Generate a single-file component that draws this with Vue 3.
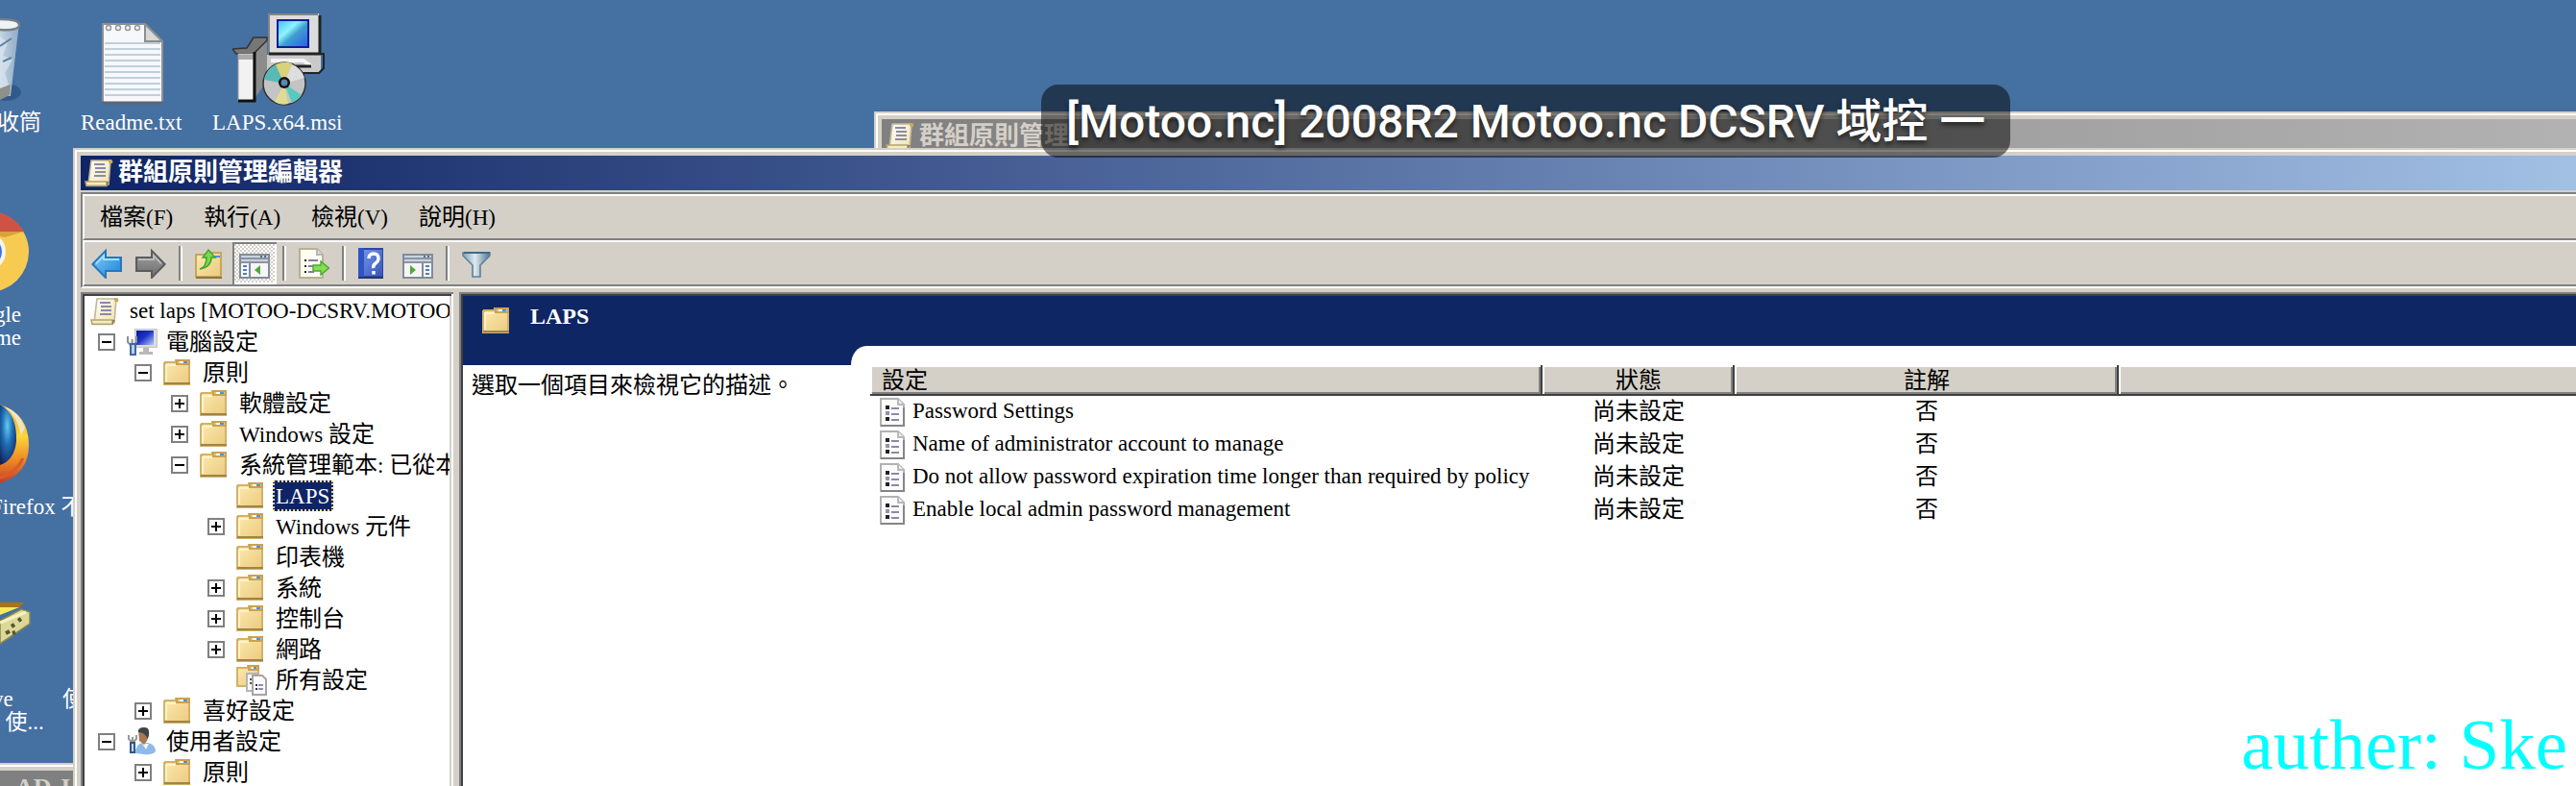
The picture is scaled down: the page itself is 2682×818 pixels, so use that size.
<script setup>
import { ref } from 'vue'

const menus = ['檔案(F)', '執行(A)', '檢視(V)', '說明(H)']

const tools = [
  { icon: 'back', name: '上一步' },
  { icon: 'forward', name: '下一步' },
  { sep: true },
  { icon: 'up', name: '上移一層' },
  { icon: 'tree', name: '顯示主控台樹狀目錄', pressed: true },
  { sep: true },
  { icon: 'export', name: '匯出清單' },
  { sep: true },
  { icon: 'help', name: '說明' },
  { icon: 'actions', name: '顯示執行窗格' },
  { sep: true },
  { icon: 'filter', name: '篩選' },
]

const nodes = [
  { level: 0, box: '-', icon: 'computer', text: '電腦設定' },
  { level: 1, box: '-', icon: 'folder', text: '原則' },
  { level: 2, box: '+', icon: 'folder', text: '軟體設定' },
  { level: 2, box: '+', icon: 'folder', text: 'Windows 設定' },
  { level: 2, box: '-', icon: 'folder', text: '系統管理範本: 已從本機電腦' },
  { level: 3, box: '', icon: 'folder', text: 'LAPS' },
  { level: 3, box: '+', icon: 'folder', text: 'Windows 元件' },
  { level: 3, box: '', icon: 'folder', text: '印表機' },
  { level: 3, box: '+', icon: 'folder', text: '系統' },
  { level: 3, box: '+', icon: 'folder', text: '控制台' },
  { level: 3, box: '+', icon: 'folder', text: '網路' },
  { level: 3, box: '', icon: 'allsettings', text: '所有設定' },
  { level: 1, box: '+', icon: 'folder', text: '喜好設定' },
  { level: 0, box: '-', icon: 'user', text: '使用者設定' },
  { level: 1, box: '+', icon: 'folder', text: '原則' },
]

const selected = ref(5)

const settings = [
  'Password Settings',
  'Name of administrator account to manage',
  'Do not allow password expiration time longer than required by policy',
  'Enable local admin password management',
]

// Splits a label into runs so that Latin text can be set slightly smaller.
const runs = (text) =>
  text.match(/[\x00-\x7f]+|[^\x00-\x7f]+/g).map((t) => ({ t, latin: t.charCodeAt(0) < 128 }))
</script>

<template>
  <main class="desktop">
    <svg class="defs" aria-hidden="true">
      <defs>
        <linearGradient id="gFolder" x1="0" y1="0" x2="1" y2="1">
          <stop offset="0" stop-color="#fdeab0" /><stop offset="1" stop-color="#ebca7e" />
        </linearGradient>
        <linearGradient id="gBlue" x1="0" y1="0" x2="1" y2="1">
          <stop offset="0" stop-color="#7fd0fb" /><stop offset="1" stop-color="#1f7fd6" />
        </linearGradient>
        <linearGradient id="gGray" x1="0" y1="0" x2="0" y2="1">
          <stop offset="0" stop-color="#a2a2a2" /><stop offset="1" stop-color="#6c6c6c" />
        </linearGradient>
        <linearGradient id="gHelp" x1="0" y1="0" x2="1" y2="1">
          <stop offset="0" stop-color="#7390e6" /><stop offset="1" stop-color="#3557bd" />
        </linearGradient>
        <linearGradient id="gFunnel" x1="0" y1="0" x2="1" y2="0">
          <stop offset="0" stop-color="#7fa0b8" /><stop offset=".45" stop-color="#dfeaf0" /><stop offset="1" stop-color="#4d7492" />
        </linearGradient>
        <linearGradient id="gScreen" x1="0" y1="0" x2="1" y2="1">
          <stop offset="0" stop-color="#0a1a9c" /><stop offset=".45" stop-color="#1c30c4" /><stop offset="1" stop-color="#b3cbfa" />
        </linearGradient>
        <linearGradient id="gScroll" x1="0" y1="0" x2="1" y2="1">
          <stop offset="0" stop-color="#ffffff" /><stop offset="1" stop-color="#f0e2a8" />
        </linearGradient>
        <linearGradient id="gLcd" x1="0" y1="0" x2="1" y2="1">
          <stop offset="0" stop-color="#4cc0f0" /><stop offset=".35" stop-color="#8df4ff" /><stop offset=".55" stop-color="#3f9fd0" /><stop offset="1" stop-color="#2f5fee" />
        </linearGradient>
        <radialGradient id="gFox" cx=".45" cy=".35" r=".7">
          <stop offset="0" stop-color="#66c8f2" /><stop offset=".45" stop-color="#1f6fb4" /><stop offset="1" stop-color="#12235c" />
        </radialGradient>
        <linearGradient id="gFlame" x1="0" y1="0" x2="0" y2="1">
          <stop offset="0" stop-color="#e8a032" /><stop offset=".4" stop-color="#fbd63c" /><stop offset=".7" stop-color="#f08a24" /><stop offset="1" stop-color="#c23c26" />
        </linearGradient>
        <linearGradient id="gBin" x1="0" y1="0" x2="1" y2="0">
          <stop offset="0" stop-color="#c3d3e0" /><stop offset="1" stop-color="#8fabc6" />
        </linearGradient>
      </defs>

      <symbol id="folder" viewBox="0 0 16 16">
        <path d="M.5 3h.5V2.500h5.500V1.500h7v12.500h-13z" fill="url(#gFolder)" stroke="#d3b16a" />
        <path d="M.5 13.500h13.500" fill="none" stroke="#a08544" />
        <path d="M7 1.500h6.500v2H7z" fill="#e6c67c" stroke="#c9a252" />
        <path d="M8.500 2.500h2" stroke="#fff" /><path d="M10.500 2.500h2" stroke="#4b93e0" />
        <path d="M1.500 12.500V4h5" fill="none" stroke="#fff3c8" />
      </symbol>
      <symbol id="allsettings" viewBox="0 0 16 16">
        <path d="M.5 1.500H6v-1h5.500V11H.5z" fill="url(#gFolder)" stroke="#d3b16a" />
        <path d="M6.500.5h5v2h-5z" fill="#e6c67c" stroke="#c9a252" /><path d="M8 1.500h1" stroke="#fff" /><path d="M9 1.500h1.500" stroke="#4b93e0" />
        <path d="M5.500 4.500h5.500v9H5.500z" fill="#f7f7f7" stroke="#b5b5b5" />
        <path d="M7 7.500h1M7 9.500h1" stroke="#555" />
        <path d="M8.500 5.500h5l2 2v8h-7z" fill="#fcfcfc" stroke="#a5a5a5" />
        <path d="M10 10.500h1M10 12.500h1" stroke="#333" /><path d="M11.500 10.500h2.500M11.500 12.500h2.500" stroke="#8e8eb0" />
      </symbol>
      <symbol id="scroll" viewBox="0 0 16 16">
        <path d="M3.500 1.500h10l-1 12.500H2z" fill="url(#gScroll)" stroke="#c0b698" stroke-width=".8" />
        <path d="M12.500 1h1.500q1 .5.5 2h-1.800z" fill="#c2ab5e" />
        <path d="M.5 12.500h11v2.200H1z" fill="#f6ecc2" stroke="#b3a46e" stroke-width=".8" />
        <path d="M11.500 12.500h1.500l-1.500 2.500z" fill="#8f8257" />
        <path d="M5 3.500h5.500M5.500 5.500H11M5.500 7.500H11M5 9.500h6" stroke="#8b8aa8" />
      </symbol>
      <symbol id="computer" viewBox="0 0 16 16">
        <path d="M4 1h12v10H4z" fill="#c4c6c6" /><path d="M4.500 1.500h11v9h-11z" fill="#dcdcd8" /><path d="M5 2h9v7.500H5z" fill="url(#gScreen)" />
        <path d="M8.500 11h3v2h2v1.500h-7V13h2z" fill="#b8b8b8" />
        <path d="M.5 5v3L2 9.500h1.500L5 8V5M2.800 6.500v3" fill="none" stroke="#8a8f92" /><path d="M2 9h2.500v5.500H2z" fill="#b8d2ee" stroke="#41699e" />
      </symbol>
      <symbol id="user" viewBox="0 0 16 16">
        <path d="M4.500 14q0-5 4-5.500h2.500q4 1 4 4.500-2 2-6 1.500z" fill="#8fb9e6" /><path d="M8 9l2 3 1.500-3z" fill="#eef5fb" />
        <path d="M6 1.500q2-2 5 0 1 3-.5 6l-1.500 2-2.500-2z" fill="#a97852" /><path d="M6 2q2-2.500 5-1 1.300 3-.2 5.500Q9.500 3 6 3z" fill="#3b4446" />
        <path d="M1 4.500v2l1 1h2l1-1v-2M3 5.500v3" fill="none" stroke="#999" /><path d="M2 8.500h2v5H2z" fill="#cadcf0" stroke="#2f5592" />
      </symbol>
      <symbol id="back" viewBox="0 0 16 16">
        <path d="M.7 8.500L7.500 1.500v3.500h8v7h-8v3.500z" fill="url(#gBlue)" stroke="#2678bd" /><path d="M2.500 8.200L6.500 4v2h8" fill="none" stroke="#a5e0fc" />
      </symbol>
      <symbol id="forward" viewBox="0 0 16 16">
        <path d="M15.300 8.500L8.500 1.500v3.500h-8v7h8v3.500z" fill="url(#gGray)" stroke="#5c5c5c" /><path d="M1.500 6h8V4l4 4.200" fill="none" stroke="#bbb" />
      </symbol>
      <symbol id="up" viewBox="0 0 16 16">
        <path d="M.5 4.500V3.500H8v-1h5.500V15H.5z" fill="url(#gFolder)" stroke="#c9a55c" /><path d="M.5 15.500h13.500" stroke="#8f7638" />
        <path d="M10 4.500h3" stroke="#4b93e0" />
        <path d="M2.500 11q3.500-1 3.500-6H4L7 1l3.500 4H8.500q0 5-6 6z" fill="#7dd84c" stroke="#3fa02c" stroke-width=".7" />
      </symbol>
      <symbol id="tree" viewBox="0 0 16 16">
        <path d="M.5 3.500h15v12H.5z" fill="#f6f6f8" stroke="#838b99" /><path d="M1 4h14v3H1z" fill="#c9d3df" /><path d="M1 5.500h14M1 7.500h14" stroke="#8a94a4" />
        <path d="M11 4.500h1M13 4.500h1" stroke="#5d6c86" /><path d="M5.500 8v7" stroke="#838b99" /><path d="M2 9.500h2M2 11.500h2M2 13.500h2" stroke="#4c7fc0" />
        <path d="M11 9v5L8 11.500z" fill="#4fa83a" />
      </symbol>
      <symbol id="actions" viewBox="0 0 16 16">
        <path d="M.5 3.500h15v12H.5z" fill="#f6f6f8" stroke="#838b99" /><path d="M1 4h14v3H1z" fill="#c9d3df" /><path d="M1 5.500h14M1 7.500h14" stroke="#8a94a4" />
        <path d="M11 4.500h1M13 4.500h1" stroke="#5d6c86" /><path d="M10.500 8v7" stroke="#838b99" /><path d="M12 9.500h2M12 11.500h2M12 13.500h2" stroke="#4c7fc0" />
        <path d="M4 9v5l3-2.500z" fill="#4fa83a" />
      </symbol>
      <symbol id="export" viewBox="0 0 16 16">
        <path d="M.5.5h9l3 3v12H.5z" fill="#fffdf0" stroke="#b5b09a" /><path d="M9.500.5v3h3" fill="#ddd" stroke="#b5b5b5" />
        <path d="M3 6.500h1M3 9.500h1M3 12.500h1" stroke="#222" /><path d="M5 6.500h5M5 9.500h3M5 12.500h3" stroke="#8080a0" />
        <path d="M7.500 9h4V7l4.200 3.500L11.500 14v-2h-4z" fill="#86dc52" stroke="#4ba632" stroke-width=".7" />
      </symbol>
      <symbol id="help" viewBox="0 0 16 16">
        <path d="M0 0h13v16H0z" fill="#2d479f" /><path d="M3 1h9.500v13.500H3z" fill="url(#gHelp)" /><path d="M0 0h3v16H0z" fill="#2f55c4" /><path d="M0 15h13v1H0z" fill="#26356f" />
        <path d="M5.500 5.500Q5.500 3 8 3t2.500 2.500Q10.500 7 9 8T8 10.500M8 12v1.700" fill="none" stroke="#fff" stroke-width="1.700" />
      </symbol>
      <symbol id="filter" viewBox="0 0 16 16">
        <path d="M.5 2.500h14v1.500L9.500 9v6H5.500V9L.5 4z" fill="url(#gFunnel)" stroke="#5f8199" stroke-width=".8" /><path d="M1 2.500h13.500" stroke="#416986" />
      </symbol>
      <symbol id="policy" viewBox="0 0 13 15">
        <path d="M.5.5h9l3 3v11H.5z" fill="#fcfcfc" stroke="#b2b2b2" /><path d="M.5 14.500h12V5" fill="none" stroke="#858585" /><path d="M9.500.5v3h3" fill="#eee" stroke="#b9b9b9" />
        <path d="M3 5h2M3 11h2" stroke="#222" stroke-width="2" /><path d="M3 8h2" stroke="#9292ad" stroke-width="2" /><path d="M6 5.500h4M6 8.500h4M6 11.500h4" stroke="#8b8aa8" />
      </symbol>
    </svg>

    <section class="icons" aria-label="桌面">
      <svg class="pic bin" viewBox="0 0 24 90">
        <ellipse cx="6" cy="78" rx="16" ry="9" fill="#33598a" />
        <path d="M0 6h20l-9 76H0z" fill="url(#gBin)" /><path d="M0 20l8 6-5 14 10 4-8 14 4 12-9 5z" fill="#dbe6ef" opacity=".7" /><path d="M3 46l9-4M0 30l12-8" stroke="#5f82a8" stroke-width="2" />
        <path d="M0 74l11-4-1 11-10 5z" fill="#8f8f8c" />
        <path d="M0 2q20 0 20 6 0 6-20 5" fill="#eef3f6" stroke="#777e84" stroke-width="2.500" />
      </svg>
      <svg class="pic notepad" viewBox="0 0 64 86">
        <path d="M1 1h44l18 18v64H1z" fill="#f7f8fc" stroke="#8d9196" stroke-width="2" /><path d="M0 83h64" stroke="#5c6670" stroke-width="3" />
        <path d="M3 21h58M3 27h58M3 33h58M3 39h58M3 45h58M3 51h58M3 57h58M3 63h58M3 69h58M3 75h58" stroke="#bfd0dc" stroke-width="2" />
        <path d="M45 1v18h18z" fill="#d7d8da" stroke="#8d8d8d" stroke-width="2" />
        <g fill="none" stroke="#999" stroke-width="1.500"><circle cx="7" cy="5" r="2.500" /><circle cx="17" cy="5" r="2.500" /><circle cx="27" cy="5" r="2.500" /><circle cx="37" cy="5" r="2.500" /></g>
      </svg>
      <svg class="pic installer" viewBox="0 0 96 96">
        <path d="M34 43h58v16l-4 4H34z" fill="#c9c9c9" /><path d="M92 42h3v15l-5 5H70" fill="none" stroke="#222" stroke-width="2" /><path d="M40 49h34l8 6" fill="none" stroke="#f4f4f4" stroke-width="4" /><path d="M66 55h16" stroke="#222" stroke-width="3" />
        <path d="M38 0h52v42H38z" fill="#dcdcdc" /><path d="M38 42V1h51" fill="none" stroke="#858585" stroke-width="2" /><path d="M91 2v40H38" fill="none" stroke="#222" stroke-width="3" />
        <path d="M46 6h34v30H46z" fill="#101c92" /><path d="M48 8h30v26H48z" fill="url(#gLcd)" />
        <path d="M22 36l14-10v44L22 90z" fill="#8c8c8c" /><path d="M0 37l4 5h18l14-14V25H22L15 36z" fill="#777" stroke="#333" stroke-width="1.500" /><path d="M6 42h16v49H6z" fill="#f2f2f2" stroke="#999" /><path d="M6 43h16v5H6z" fill="#a9a9a9" /><path d="M23 40v51H6" fill="none" stroke="#111" stroke-width="3" />
        <circle cx="54" cy="73" r="22" fill="#c4c4c4" stroke="#333" stroke-width="1.500" />
        <path d="M54 73L33 69a22 22 0 0 1 12-16z" fill="#58b9b6" /><path d="M54 73L45 53q9-4 17-1z" fill="#d8d27a" /><path d="M54 73l8-20a22 22 0 0 1 13 14z" fill="#dedede" />
        <path d="M54 73l18 12a22 22 0 0 1-10 8z" fill="#59c9bd" /><path d="M54 73l4 21q-8 2-14-2z" fill="#dfdb93" />
        <circle cx="54" cy="72" r="6" fill="#111" /><circle cx="54" cy="72" r="3.500" fill="#5b86ae" />
      </svg>
      <svg class="pic chrome" viewBox="0 0 32 86">
        <circle cx="-12" cy="43" r="42" fill="#f7cb52" /><path d="M-12 1A42 42 0 0 1 25 22H-12z" fill="#cf5245" /><path d="M0 22h25l-20 6-5-1z" fill="#d9a23e" /><circle cx="-14" cy="43" r="20" fill="#f4f4f4" /><circle cx="-14" cy="43" r="16" fill="#3f74e0" />
      </svg>
      <svg class="pic firefox" viewBox="0 0 32 86">
        <path d="M0 2q30 10 30 42 0 30-30 40z" fill="url(#gFlame)" /><path d="M0 2q18 10 17 38Q15 60 0 65z" fill="url(#gFox)" /><path d="M4 4q14 10 18 30l4-8Q20 9 4 4z" fill="#eee6c0" /><path d="M24 58q-8 16-24 20" fill="none" stroke="#d75c2a" stroke-width="3" />
      </svg>
      <svg class="pic tool" viewBox="0 0 34 48">
        <path d="M0 1h25l-6 6H0z" fill="#a87412" /><path d="M0 6h20l-20 8z" fill="#f6ea58" /><path d="M0 20L22 8l9 3v12L0 44z" fill="#dcd898" stroke="#8b864e" stroke-width="1.500" /><path d="M0 22l27-11" stroke="#f6f2bd" stroke-width="3" /><path d="M19 20l3-2M12 26l3-2M6 33l4-2M13 33l3-1" stroke="#56542d" stroke-width="4" />
      </svg>
      <span class="cap c-bin">收筒</span>
      <span class="cap c-readme">Readme.txt</span>
      <span class="cap c-msi">LAPS.x64.msi</span>
      <span class="cap c-chrome">gle<br />me</span>
      <span class="cap c-fox">Firefox 不</span>
      <span class="cap c-tool">ve<br />r 使...</span>
      <span class="cap c-next">使</span>
    </section>

    <section class="window window-corner"><div class="caption inactive">AD J</div></section>

    <section class="window window-back">
      <div class="caption inactive"><svg class="i32"><use href="#scroll" /></svg><span>群組原則管理</span></div>
    </section>

    <section class="window window-main">
      <header class="caption active"><svg class="i32"><use href="#scroll" /></svg><h1>群組原則管理編輯器</h1></header>

      <div class="bars">
        <nav class="menubar">
          <button v-for="m in menus" :key="m" type="button">
            <span v-for="r in runs(m)" :key="r.t" :class="{ latin: r.latin }">{{ r.t }}</span>
          </button>
        </nav>
        <div class="toolbar" role="toolbar">
          <template v-for="(t, i) in tools" :key="i">
            <span v-if="t.sep" class="sep"></span>
            <button v-else type="button" :class="{ pressed: t.pressed }" :aria-label="t.name">
              <svg class="i32"><use :href="'#' + t.icon" /></svg>
            </button>
          </template>
        </div>
      </div>

      <div class="panes">
        <ul class="tree" role="tree">
          <li class="root" role="treeitem">
            <svg class="i32"><use href="#scroll" /></svg><span class="label latin">set laps [MOTOO-DCSRV.MOTOO</span>
          </li>
          <li v-for="(n, i) in nodes" :key="i" role="treeitem" :style="{ paddingLeft: 14 + 38 * n.level + 'px' }">
            <button v-if="n.box" type="button" class="box" :class="{ plus: n.box === '+' }" :aria-label="n.box === '+' ? '展開' : '摺疊'"></button>
            <span v-else class="nobox"></span>
            <svg class="i32"><use :href="'#' + n.icon" /></svg>
            <span class="label" :class="{ on: selected === i }" @click="selected = i">
              <span v-for="r in runs(n.text)" :key="r.t" :class="{ latin: r.latin }">{{ r.t }}</span>
            </span>
          </li>
        </ul>

        <section class="detail">
          <header class="banner"><svg class="i32"><use href="#folder" /></svg><h2>LAPS</h2></header>
          <div class="content">
            <p class="hint">選取一個項目來檢視它的描述。</p>
            <div class="sheet">
              <table>
                <colgroup><col class="w-name" /><col class="w-state" /><col class="w-note" /><col /></colgroup>
                <thead>
                  <tr><th class="first">設定</th><th>狀態</th><th>註解</th><th></th></tr>
                </thead>
                <tbody>
                  <tr v-for="s in settings" :key="s">
                    <td><div class="entry"><svg class="sheet-icon"><use href="#policy" /></svg><span>{{ s }}</span></div></td>
                    <td class="mid">尚未設定</td>
                    <td class="mid">否</td>
                    <td></td>
                  </tr>
                </tbody>
              </table>
            </div>
          </div>
        </section>
      </div>
    </section>

    <div class="hud">[Motoo.nc] 2008R2 Motoo.nc DCSRV 域控 一</div>
    <div class="mark">auther: Ske</div>
  </main>
</template>

<style>
html,
body,
#app {
  height: 100%;
}
body {
  margin: 0;
}
</style>

<style scoped>
.desktop {
  position: relative;
  height: 100%;
  overflow: hidden;
  background: #4570a2;
  color: #000;
  font-family: "Liberation Serif", "Noto Sans CJK TC", serif;
  font-size: 24px;
  line-height: 32px;
  white-space: nowrap;
}
.defs {
  position: absolute;
  width: 0;
  height: 0;
}
.i32 {
  width: 32px;
  height: 32px;
  flex: none;
  display: block;
}
.latin {
  font-size: 23px;
}
button {
  border: 0;
  padding: 0;
  margin: 0;
  background: none;
  color: inherit;
  font: inherit;
}
h1,
h2,
p,
ul {
  margin: 0;
  padding: 0;
}

/* desktop shortcuts */
.pic,
.cap {
  position: absolute;
}
.bin { left: 0; top: 18px; width: 24px; height: 90px; }
.notepad { left: 106px; top: 24px; width: 64px; height: 86px; }
.installer { left: 242px; top: 14px; width: 96px; height: 96px; }
.chrome { left: 0; top: 219px; width: 32px; height: 86px; }
.firefox { left: 0; top: 419px; width: 32px; height: 86px; }
.tool { left: 0; top: 626px; width: 34px; height: 48px; }
.cap {
  color: #fff;
  font-size: 23px;
  line-height: 24px;
}
.c-bin { left: -3px; top: 116px; }
.c-readme { left: 84px; top: 116px; }
.c-msi { left: 221px; top: 116px; }
.c-chrome { right: calc(100% - 22px); top: 316px; }
.c-fox { left: -10px; top: 516px; }
.c-tool { left: -8px; top: 716px; }
.c-next { left: 65px; top: 716px; }

/* classic window frame */
.window {
  position: absolute;
  box-sizing: border-box;
  background: #d4d0c8;
  padding: 8px 0 0 8px;
  box-shadow: inset 2px 2px #d4d0c8, inset 4px 4px #fff;
}
.window-corner { left: -40px; top: 794px; width: 200px; height: 80px; }
.window-back { left: 910px; top: 116px; right: 0; height: 60px; }
.window-main {
  left: 76px;
  top: 154px;
  right: 0;
  bottom: 0;
  display: flex;
  flex-direction: column;
}
.caption {
  display: flex;
  align-items: center;
  height: 36px;
  padding-left: 4px;
  font-weight: bold;
}
.caption h1,
.caption span {
  margin-left: 3px;
  font-size: 26px;
  line-height: 36px;
  font-weight: bold;
}
.active {
  background: linear-gradient(90deg, #0e2464, #a2bfe4);
  color: #fff;
}
.inactive {
  background: linear-gradient(90deg, #808080, #b2b2b2);
  color: #d4d0c8;
}
.window-corner .caption {
  background: #808080;
  padding-left: 48px;
  font-size: 26px;
}

/* menu and tool bars */
.bars {
  margin-top: 2px;
  border-top: 2px solid #808080;
  border-left: 2px solid #808080;
  border-bottom: 2px solid #fff;
}
.menubar,
.toolbar {
  display: flex;
  align-items: center;
  height: 44px;
  border-top: 2px solid #fff;
  border-left: 2px solid #fff;
  border-bottom: 2px solid #808080;
}
.menubar button {
  padding: 0 16px;
}
.toolbar button {
  width: 46px;
  height: 44px;
  padding-left: 7px;
}
.toolbar .pressed {
  background: repeating-conic-gradient(#fff 0 25%, #d4d0c8 0 50%) 0 0 / 4px 4px;
  box-shadow: inset 2px 2px #808080, inset -2px -2px #fff;
}
.sep {
  width: 2px;
  height: 36px;
  margin: 0 6px;
  border-left: 2px solid #808080;
  background: #fff;
}

/* panes */
.panes {
  flex: 1;
  min-height: 0;
  display: flex;
  gap: 6px;
  margin-top: 4px;
}
.tree {
  box-sizing: border-box;
  width: 388px;
  flex: none;
  list-style: none;
  background: #fff;
  padding: 4px 4px 0 4px;
  overflow: clip;
  overflow-clip-margin: content-box;
  box-shadow: inset 2px 2px #808080, inset -2px 0 #fff, inset 4px 4px #404040, inset -4px 0 #d4d0c8;
}
.tree li {
  display: flex;
  align-items: center;
  height: 32px;
}
.tree .root {
  padding-left: 6px;
}
.label {
  margin-left: 6px;
  padding: 0 4px 0 3px;
  height: 32px;
}
.on {
  background: #0e2464;
  color: #fff;
  outline: 2px dotted #f3dc9a;
  outline-offset: -2px;
}
.box,
.nobox {
  width: 18px;
  height: 18px;
  flex: none;
  margin-right: 12px;
}
.box {
  border: 2px solid #808080;
  background: linear-gradient(#000, #000) center / 10px 2px no-repeat #fff;
}
.plus {
  background: linear-gradient(#000, #000) center / 10px 2px no-repeat, linear-gradient(#000, #000) center / 2px 10px no-repeat #fff;
}

.detail {
  flex: 1;
  min-width: 0;
  background: #fff;
  padding: 4px 0 0 4px;
  box-shadow: inset 2px 2px #808080, inset 4px 4px #404040;
}
.banner {
  display: flex;
  align-items: flex-start;
  box-sizing: border-box;
  height: 72px;
  padding: 10px 0 0 20px;
  background: #0e2664;
  color: #fff;
}
.banner h2 {
  margin-left: 18px;
  font-size: 24px;
  line-height: 22px;
}
.content {
  display: flex;
}
.hint {
  box-sizing: border-box;
  width: 404px;
  padding: 5px 0 0 9px;
  flex: none;
}
.sheet {
  position: relative;
  flex: 1;
  margin-top: -20px;
  padding: 20px 0 0 20px;
  background: #fff;
  border-top-left-radius: 16px 20px;
}
table {
  width: 100%;
  table-layout: fixed;
  border-collapse: separate;
  border-spacing: 0;
}
.w-name { width: 700px; }
.w-state { width: 200px; }
.w-note { width: 400px; }
th {
  height: 32px;
  padding: 0;
  font-weight: normal;
  line-height: 28px;
  background: #d4d0c8;
  box-shadow: inset 0 -2px #404040, inset -2px 0 #404040, inset 2px 2px #fff, inset -4px -4px #808080;
}
th:last-child {
  box-shadow: inset 0 -2px #404040, inset 2px 2px #fff, inset 0 -4px #808080;
}
.first {
  text-align: left;
  padding-left: 12px;
}
td {
  height: 34px;
  padding: 0;
  vertical-align: top;
}
.mid {
  text-align: center;
}
.entry {
  display: flex;
  align-items: flex-start;
  gap: 8px;
  padding-left: 10px;
  font-size: 23px;
}
.sheet-icon {
  width: 26px;
  height: 30px;
  margin-top: 2px;
  flex: none;
}

/* overlays */
.hud {
  position: absolute;
  left: 1084px;
  top: 88px;
  padding: 2px 26px 0;
  border-radius: 18px;
  background: rgba(0, 0, 0, 0.5);
  color: #fff;
  font: 500 48px/74px Roboto, "Noto Sans CJK SC", sans-serif;
  text-shadow: 0 3px 5px rgba(0, 0, 0, 0.6);
}
.mark {
  position: absolute;
  right: 9px;
  bottom: 0;
  color: #0ff;
  font-size: 75px;
  line-height: 86px;
}
</style>
